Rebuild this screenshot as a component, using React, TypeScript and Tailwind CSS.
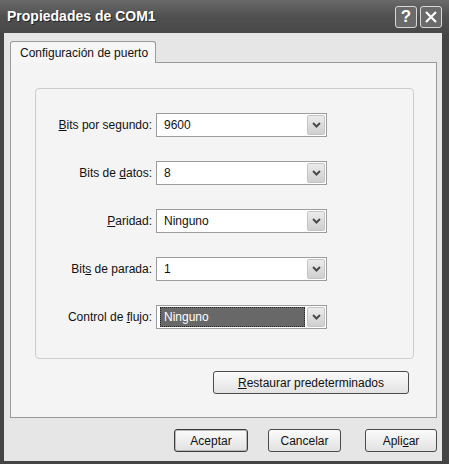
const font = { fontFamily: '"Liberation Sans", Arial, sans-serif' }

function Combo({ value, selected }: { value: string; selected?: boolean }) {
  return (
    <div className="flex h-[24px] w-[171px] items-stretch border border-[#9c9c9c] bg-white p-[1px]">
      <div className="flex flex-1 items-center pr-[2px]">
        {selected ? (
          <div className="ml-[2px] flex h-[20px] flex-1 items-center border border-dotted border-[#222] bg-[#686868] pl-[3px] text-white">
            {value}
          </div>
        ) : (
          <span className="pl-[6px] text-[#111]">{value}</span>
        )}
      </div>
      <div className="flex w-[18px] items-center justify-center rounded-[2px] border border-[#c4c4c4] bg-gradient-to-b from-[#ececec] to-[#cfcfcf]">
        <svg width="9" height="6" viewBox="0 0 9 6">
          <path d="M1 1 L4.5 4.5 L8 1" stroke="#4a4a4a" strokeWidth="2" fill="none" />
        </svg>
      </div>
    </div>
  )
}

function Row({ label, value, selected }: { label: React.ReactNode; value: string; selected?: boolean }) {
  return (
    <div className="flex items-center pl-[3px]">
      <div className="w-[117px] whitespace-nowrap pr-[4px] text-right text-[#111]">{label}</div>
      <Combo value={value} selected={selected} />
    </div>
  )
}

function Btn({ children, w, isDefault }: { children: React.ReactNode; w: string; isDefault?: boolean }) {
  return (
    <button
      className={`flex h-[23px] items-center justify-center rounded-[3px] border bg-gradient-to-b from-[#fbfbfb] to-[#e2e2e2] text-[#111] ${w} ${
        isDefault ? 'border-[#3a3a3a] shadow-[inset_0_0_0_1px_#b8b8b8]' : 'border-[#4a4a4a]'
      }`}
    >
      {children}
    </button>
  )
}

export default function App() {
  return (
    <div style={font} className="flex h-[464px] w-[449px] flex-col bg-[#444] text-[12px]">
      {/* Title bar */}
      <div className="flex h-[33px] items-center justify-between bg-gradient-to-b from-[#6a6a6a] via-[#505050] to-[#484848] pl-[7px] pr-[7px]">
        <span className="text-[14px] font-bold text-white [text-shadow:1px_1px_0_#222]">Propiedades de COM1</span>
        <div className="flex gap-[3px] pt-[1px]">
          <div className="flex h-[22px] w-[22px] items-center justify-center rounded-[3px] border border-[#d8d8d8] bg-[#6a6a6a] text-[17px] font-bold text-white">
            ?
          </div>
          <div className="flex h-[22px] w-[22px] items-center justify-center rounded-[3px] border border-[#d8d8d8] bg-[#6a6a6a]">
            <svg width="14" height="14" viewBox="0 0 14 14">
              <path d="M2 2 L12 12 M12 2 L2 12" stroke="white" strokeWidth="2.2" />
            </svg>
          </div>
        </div>
      </div>

      {/* Client area */}
      <div className="ml-[4px] mr-[7px] mb-[3px] flex flex-1 flex-col bg-[#e6e6e6] pl-[6px] pr-[5px] pt-[8px]">
        {/* Tab */}
        <div className="relative z-10 -mb-px flex h-[22px] w-[146px] items-center whitespace-nowrap rounded-t-[3px] border border-b-0 border-[#9a9a9a] bg-[#f6f6f6] pl-[9px] text-[#111]">
          Configuración de puerto
        </div>
        {/* Panel */}
        <div className="flex h-[356px] flex-col border border-[#9a9a9a] bg-[#f4f4f4] pl-[24px] pr-[22px] pt-[25px]">
          <div className="flex h-[271px] flex-col gap-[24px] rounded-[4px] border border-[#cdcdcd] pt-[24px]">
            <Row label={<><u>B</u>its por segundo:</>} value="9600" />
            <Row label={<>Bits de <u>d</u>atos:</>} value="8" />
            <Row label={<><u>P</u>aridad:</>} value="Ninguno" />
            <Row label={<>Bit<u>s</u> de parada:</>} value="1" />
            <Row label={<>Control de <u>f</u>lujo:</>} value="Ninguno" selected />
          </div>
          <div className="mt-[12px] flex justify-end pr-[5px]">
            <Btn w="w-[196px]">
              <span>
                <u>R</u>estaurar predeterminados
              </span>
            </Btn>
          </div>
        </div>
        {/* Bottom buttons */}
        <div className="mt-[11px] flex justify-end">
          <Btn w="w-[74px]" isDefault>
            Aceptar
          </Btn>
          <div className="w-[20px]" />
          <Btn w="w-[73px]">Cancelar</Btn>
          <div className="w-[24px]" />
          <Btn w="w-[72px]">
            <span>
              Apli<u>c</u>ar
            </span>
          </Btn>
        </div>
      </div>
    </div>
  )
}
